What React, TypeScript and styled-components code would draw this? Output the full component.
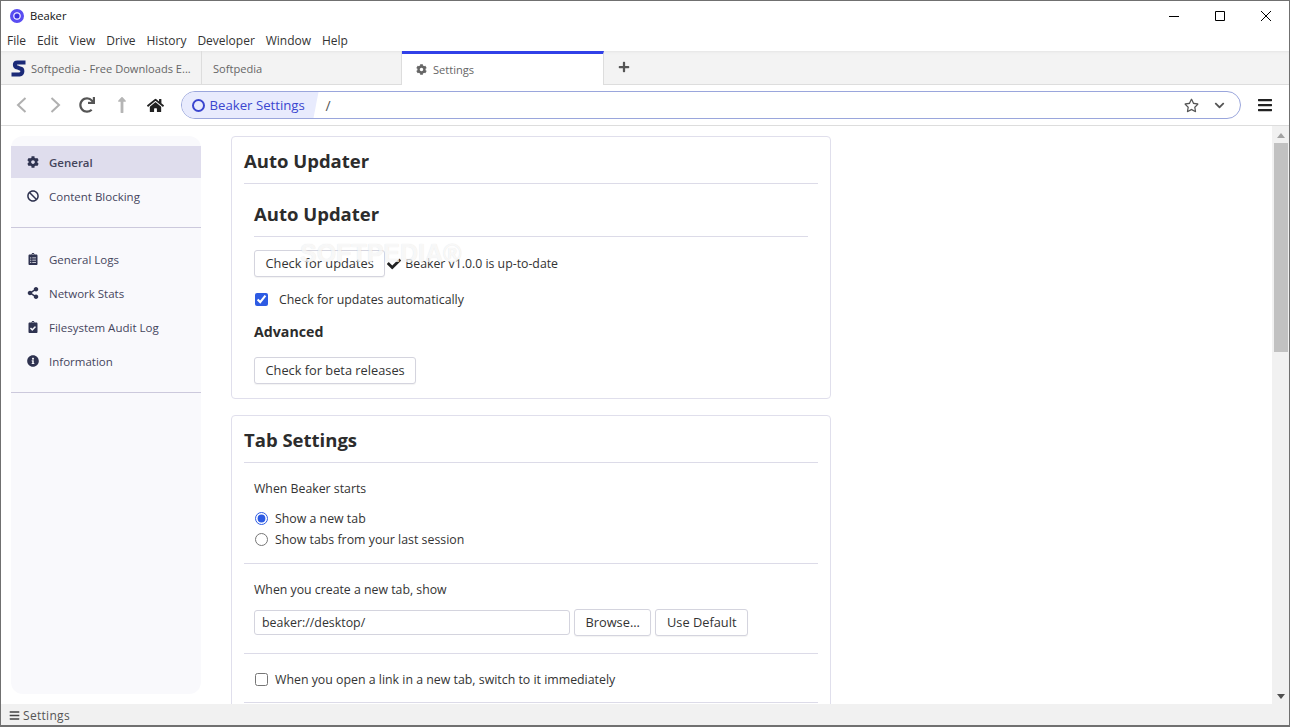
import React from "react";
import styled, { createGlobalStyle } from "styled-components";
import {
  FaBan,
  FaBars,
  FaCheck,
  FaChevronDown,
  FaClipboardCheck,
  FaClipboardList,
  FaCog,
  FaHome,
  FaInfoCircle,
  FaLongArrowAltUp,
  FaPlus,
  FaRedo,
  FaRegStar,
  FaShareAlt,
} from "react-icons/fa";

const GlobalStyle = createGlobalStyle`
  html, body {
    margin: 0;
    padding: 0;
    height: 727px;
    overflow: hidden;
    background: #fff;
  }
  * {
    box-sizing: border-box;
  }
`;

const chromeFont = `"Open Sans", "Noto Sans", "Liberation Sans", sans-serif`;

const Window = styled.div`
  width: 1290px;
  height: 727px;
  display: flex;
  flex-direction: column;
  border: 1px solid #707070;
  border-width: 1px 1px 2px 1px;
  font-family: ${chromeFont};
  font-size: 12px;
  color: #333;
  overflow: hidden;
`;

const TitleBar = styled.div`
  height: 29px;
  flex: none;
  display: flex;
  align-items: center;
  padding-left: 9px;
  font-size: 11.2px;
  color: #111;
`;

const AppLogo = styled.span`
  width: 14px;
  height: 14px;
  border-radius: 50%;
  border: 3px solid #5a4df2;
  background: #3a2fe0;
  box-shadow: inset 0 0 0 1.5px #dcd8ff;
  margin-right: 6px;
`;

const WindowControls = styled.div`
  margin-left: auto;
  display: flex;
  height: 100%;
  align-items: center;
`;

const WindowButton = styled.button`
  width: 46px;
  height: 29px;
  border: 0;
  padding: 0;
  background: none;
  display: flex;
  align-items: center;
  justify-content: center;
`;

const MenuBar = styled.div`
  height: 21px;
  flex: none;
  display: flex;
  align-items: center;
  padding-left: 6px;
  gap: 10.9px;
  color: #333;
  padding-bottom: 1px;
`;

const TabBar = styled.div`
  height: 34px;
  flex: none;
  display: flex;
  background: #f3f3f3;
  border-bottom: 1px solid #ddd;
  box-shadow: inset 0 3px 3px -2px #e4e4e4;
  color: #666;
  font-size: 11.1px;
`;

const Tab = styled.div<{ $active?: boolean; $width: number; $pad: number }>`
  width: ${(p) => p.$width}px;
  flex: none;
  display: flex;
  align-items: center;
  gap: 5px;
  padding-left: ${(p) => p.$pad}px;
  padding-top: 2px;
  border-right: 1px solid #ddd;
  white-space: nowrap;
  overflow: hidden;
  ${(p) =>
    p.$active &&
    `
    background: #fff;
    border-top: 3px solid #3140e8;
    height: 34px;
    padding-top: 0;
    padding-bottom: 1px;
    gap: 6px;
  `}
`;

const TabIcon = styled.svg`
  width: 15px;
  height: 17px;
  flex: none;
`;

const NewTab = styled.div`
  width: 40px;
  display: flex;
  align-items: center;
  justify-content: center;
  color: #555;
  font-size: 12px;
  padding-bottom: 2px;
`;

const NavBar = styled.div`
  height: 41px;
  flex: none;
  display: flex;
  align-items: center;
  border-bottom: 1px solid #ddd;
  padding-left: 4px;
`;

const NavButton = styled.span<{ $color: string; $size: number; $nudge?: number }>`
  display: flex;
  width: 33.5px;
  padding-right: ${(p) => p.$nudge ?? 0}px;
  align-items: center;
  justify-content: center;
  color: ${(p) => p.$color};
  font-size: ${(p) => p.$size}px;
`;

const UrlBar = styled.div`
  width: 1060px;
  height: 28px;
  margin-left: 8px;
  flex: none;
  display: flex;
  align-items: center;
  border: 1px solid #9aa6dc;
  border-radius: 14px;
  overflow: hidden;
  background: #fff;
`;

const Origin = styled.div`
  height: 100%;
  width: 137px;
  display: flex;
  align-items: center;
  gap: 5px;
  padding-left: 10px;
  background: #e8ebfd;
  color: #3b46cf;
  font-size: 13.2px;
  clip-path: polygon(0 0, 100% 0, calc(100% - 5px) 100%, 0 100%);
`;

const OriginRing = styled.span`
  width: 13px;
  height: 13px;
  border-radius: 50%;
  border: 2px solid #3b46cf;
`;

const UrlPath = styled.div`
  margin-left: 7px;
  font-size: 14px;
  color: #555;
  flex: 1;
`;

const UrlAction = styled.span<{ $size: number; $width: number }>`
  display: flex;
  justify-content: center;
  width: ${(p) => p.$width}px;
  font-size: ${(p) => p.$size}px;
  color: #555;
`;

const Hamburger = styled.span`
  display: flex;
  margin-left: 16px;
  font-size: 16px;
  color: #222;
`;

const Body = styled.div`
  flex: 1;
  min-height: 0;
  display: flex;
  position: relative;
`;

const Sidebar = styled.nav`
  width: 190px;
  height: 558px;
  flex: none;
  margin: 10px 30px 0 10px;
  padding-top: 10px;
  background: #f9f9fc;
  border-radius: 12px;
`;

const SideGroup = styled.div`
  padding-bottom: 14px;
  margin-bottom: 14px;
  border-bottom: 1px solid #ccc9dc;
`;

const SideItem = styled.div<{ $active?: boolean }>`
  height: ${(p) => (p.$active ? "32px" : "34px")};
  margin-bottom: ${(p) => (p.$active ? "1px" : "0")};
  display: flex;
  align-items: center;
  padding-left: 16px;
  color: #45455c;
  font-weight: ${(p) => (p.$active ? 600 : 400)};
  background: ${(p) => (p.$active ? "#dfdded" : "transparent")};
  font-size: 11.5px;
`;

const SideIcon = styled.span`
  display: flex;
  width: 12px;
  justify-content: center;
  margin-right: 10px;
  font-size: 12px;
  color: #2f3350;
`;

const Main = styled.main`
  width: 600px;
  flex: none;
  padding-top: 10px;
  overflow: hidden;
`;

const Card = styled.section`
  border: 1px solid #e0dfec;
  border-radius: 4px;
  padding: 0 12px 14px;
  margin-bottom: 16px;
`;

const CardTitle = styled.h2`
  margin: 0;
  height: 47px;
  line-height: 47px;
  font-size: 18.5px;
  font-weight: 700;
  color: #2c2c2c;
  border-bottom: 1px solid #dcdbe8;
`;

const Inset = styled.div`
  padding: 0 10px;
`;

const Subheading = styled(CardTitle)`
  height: 53px;
  line-height: 59px;
`;

const ButtonRow = styled.div<{ $top: number }>`
  display: flex;
  align-items: center;
  margin-top: ${(p) => p.$top}px;
`;

const Button = styled.button<{ $ml?: number }>`
  height: 27px;
  padding: 0 10.5px 1px;
  margin-left: ${(p) => p.$ml ?? 0}px;
  background: #fff;
  border: 1px solid #d4d4de;
  border-radius: 3px;
  box-shadow: 0 1px 1px rgba(0, 0, 0, 0.05);
  font-family: ${chromeFont};
  font-size: 12.8px;
  color: #333;
`;

const Status = styled.span`
  display: flex;
  align-items: center;
  margin-left: 2px;
  gap: 4px;
  font-size: 12.3px;
  color: #333;
  svg {
    font-size: 14px;
    color: #222;
  }
`;

const CheckRow = styled.label<{ $top: number; $gap: number }>`
  display: flex;
  align-items: center;
  margin-top: ${(p) => p.$top}px;
  height: 16px;
  font-size: 12.35px;
  color: #333;
  gap: ${(p) => p.$gap}px;
  input {
    margin: 0 0 0 1px;
    accent-color: #2d5be3;
    width: 13px;
    height: 13px;
  }
`;

const Advanced = styled.h3`
  margin: 15px 0 0;
  height: 20px;
  line-height: 20px;
  font-size: 14.2px;
  font-weight: 700;
  color: #2c2c2c;
`;

const Field = styled.div<{ $pad: number }>`
  padding: 0 10px ${(p) => p.$pad}px;
  border-bottom: 1px solid #dcdbe8;
`;

const FieldLabel = styled.div`
  padding-top: 17px;
  height: 34px;
  font-size: 12.3px;
  color: #333;
`;

const TextInput = styled.input`
  width: 316px;
  height: 25px;
  padding: 0 7px;
  border: 1px solid #d4d4de;
  border-radius: 3px;
  font-family: ${chromeFont};
  font-size: 12.4px;
  color: #333;
`;

const Watermark = styled.div`
  position: absolute;
  left: 299px;
  top: 113px;
  font-family: "Liberation Sans", sans-serif;
  font-size: 25px;
  line-height: 28px;
  font-weight: 700;
  white-space: nowrap;
  color: rgba(255, 255, 255, 0.75);
  text-shadow: 0 0 1px rgba(0, 0, 0, 0.12);
  pointer-events: none;
`;

const Scrollbar = styled.div`
  margin-left: auto;
  width: 17px;
  flex: none;
  background: #f1f1f1;
  display: flex;
  flex-direction: column;
  align-items: center;
`;

const ArrowUp = styled.span`
  margin-top: 7px;
  width: 0;
  height: 0;
  border: 4px solid transparent;
  border-top: 0;
  border-bottom: 5px solid #a3a3a3;
`;

const Thumb = styled.div`
  width: 14px;
  height: 209px;
  margin-top: 5px;
  background: #c1c1c1;
`;

const ArrowDown = styled.span`
  margin-top: auto;
  margin-bottom: 5px;
  width: 0;
  height: 0;
  border: 4px solid transparent;
  border-bottom: 0;
  border-top: 5px solid #505050;
`;

const StatusBar = styled.div`
  height: 21px;
  flex: none;
  display: flex;
  align-items: center;
  gap: 3px;
  padding: 2px 0 0 8px;
  background: #f1f1f1;
  color: #555;
  letter-spacing: 0.3px;
  svg {
    font-size: 11px;
    color: #444;
  }
`;

const menus = ["File", "Edit", "View", "Drive", "History", "Developer", "Window", "Help"];

const SoftpediaIcon = () => (
  <TabIcon viewBox="0 0 15 17">
    <path
      d="M14.5 2.5H6.5C3 2.5 3 7 6.5 7.5L9 8.5C12.5 9 12 14 8.5 14.5H.5"
      fill="none"
      stroke="#1b2a78"
      strokeWidth="4"
    />
  </TabIcon>
);

const Chevron = ({ d }: { d: string }) => (
  <svg width="11" height="16" viewBox="0 0 11 16">
    <path d={d} fill="none" stroke="currentColor" strokeWidth="2" />
  </svg>
);

const App = () => {
  return (
    <>
      <GlobalStyle />
      <Window>
        <TitleBar>
          <AppLogo />
          Beaker
          <WindowControls>
            <WindowButton aria-label="Minimize">
              <svg width="10" height="10" viewBox="0 0 10 10">
                <path d="M0 5.5H10" stroke="#000" />
              </svg>
            </WindowButton>
            <WindowButton aria-label="Maximize">
              <svg width="10" height="10" viewBox="0 0 10 10">
                <path d="M.5.5H9.5V9.5H.5Z" fill="none" stroke="#000" />
              </svg>
            </WindowButton>
            <WindowButton aria-label="Close">
              <svg width="10" height="10" viewBox="0 0 10 10">
                <path d="M0 0L10 10M10 0L0 10" stroke="#000" />
              </svg>
            </WindowButton>
          </WindowControls>
        </TitleBar>
        <MenuBar>
          {menus.map((m) => (
            <span key={m}>{m}</span>
          ))}
        </MenuBar>
        <TabBar>
          <Tab $width={201} $pad={10}>
            <SoftpediaIcon />
            Softpedia - Free Downloads E...
          </Tab>
          <Tab $width={200} $pad={11}>
            Softpedia
          </Tab>
          <Tab $active $width={202} $pad={14}>
            <FaCog color="#666" size={11} />
            Settings
          </Tab>
          <NewTab>
            <FaPlus />
          </NewTab>
        </TabBar>
        <NavBar>
          <NavButton $color="#b0b0b0" $size={16}>
            <Chevron d="M9.5 1L2 8l7.5 7" />
          </NavButton>
          <NavButton $color="#b0b0b0" $size={16}>
            <Chevron d="M1.5 1L9 8l-7.5 7" />
          </NavButton>
          <NavButton $color="#555" $size={16} $nudge={4}>
            <FaRedo />
          </NavButton>
          <NavButton $color="#b5b5b5" $size={18}>
            <FaLongArrowAltUp />
          </NavButton>
          <NavButton $color="#222" $size={17}>
            <FaHome />
          </NavButton>
          <UrlBar>
            <Origin>
              <OriginRing />
              Beaker Settings
            </Origin>
            <UrlPath>/</UrlPath>
            <UrlAction $size={15} $width={28}>
              <FaRegStar />
            </UrlAction>
            <UrlAction $size={11} $width={28}>
              <FaChevronDown />
            </UrlAction>
            <UrlAction $size={1} $width={6} />
          </UrlBar>
          <Hamburger>
            <FaBars />
          </Hamburger>
        </NavBar>
        <Body>
          <Sidebar>
            <SideGroup>
              <SideItem $active>
                <SideIcon>
                  <FaCog />
                </SideIcon>
                General
              </SideItem>
              <SideItem>
                <SideIcon>
                  <FaBan />
                </SideIcon>
                Content Blocking
              </SideItem>
            </SideGroup>
            <SideGroup>
              <SideItem>
                <SideIcon>
                  <FaClipboardList />
                </SideIcon>
                General Logs
              </SideItem>
              <SideItem>
                <SideIcon>
                  <FaShareAlt />
                </SideIcon>
                Network Stats
              </SideItem>
              <SideItem>
                <SideIcon>
                  <FaClipboardCheck />
                </SideIcon>
                Filesystem Audit Log
              </SideItem>
              <SideItem>
                <SideIcon>
                  <FaInfoCircle />
                </SideIcon>
                Information
              </SideItem>
            </SideGroup>
          </Sidebar>
          <Main>
            <Card>
              <CardTitle>Auto Updater</CardTitle>
              <Inset>
                <Subheading>Auto Updater</Subheading>
                <ButtonRow $top={13}>
                  <Button>Check for updates</Button>
                  <Status>
                    <FaCheck />
                    Beaker v1.0.0 is up-to-date
                  </Status>
                </ButtonRow>
                <CheckRow $top={14} $gap={11}>
                  <input type="checkbox" defaultChecked />
                  Check for updates automatically
                </CheckRow>
                <Advanced>Advanced</Advanced>
                <ButtonRow $top={15}>
                  <Button>Check for beta releases</Button>
                </ButtonRow>
              </Inset>
            </Card>
            <Card>
              <CardTitle>Tab Settings</CardTitle>
              <Field $pad={16}>
                <FieldLabel>When Beaker starts</FieldLabel>
                <CheckRow $top={13} $gap={7}>
                  <input type="radio" name="start" defaultChecked />
                  Show a new tab
                </CheckRow>
                <CheckRow $top={5} $gap={7}>
                  <input type="radio" name="start" />
                  Show tabs from your last session
                </CheckRow>
              </Field>
              <Field $pad={17}>
                <FieldLabel>When you create a new tab, show</FieldLabel>
                <ButtonRow $top={11}>
                  <TextInput defaultValue="beaker://desktop/" />
                  <Button $ml={4}>Browse...</Button>
                  <Button $ml={4}>Use Default</Button>
                </ButtonRow>
              </Field>
              <Field $pad={15}>
                <CheckRow $top={17} $gap={7}>
                  <input type="checkbox" />
                  When you open a link in a new tab, switch to it immediately
                </CheckRow>
              </Field>
            </Card>
          </Main>
          <Watermark>SOFTPEDIA®</Watermark>
          <Scrollbar>
            <ArrowUp />
            <Thumb />
            <ArrowDown />
          </Scrollbar>
        </Body>
        <StatusBar>
          <FaBars />
          Settings
        </StatusBar>
      </Window>
    </>
  );
};

export default App;
